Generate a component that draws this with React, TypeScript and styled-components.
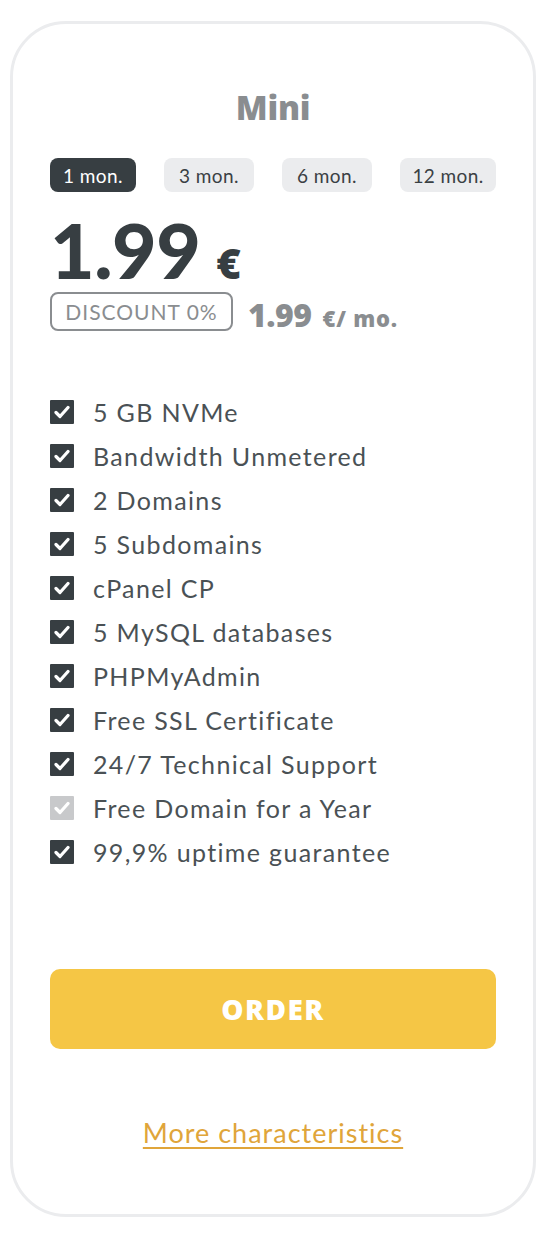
import React, { useState } from "react";
import styled, { createGlobalStyle } from "styled-components";

const Global = createGlobalStyle`
  html, body { margin: 0; padding: 0; background: #ffffff; }
  body { font-family: "Lato", "Open Sans", sans-serif; }
  * { box-sizing: border-box; }
`;

const Page = styled.div`
  padding: 21px 12px 0 10px;
`;

const Card = styled.div`
  width: 526px;
  height: 1196px;
  border: 3px solid #ebecee;
  border-radius: 56px;
  padding: 61px 37px 0 37px;
  display: flex;
  flex-direction: column;
`;

const Title = styled.h2`
  margin: 0;
  text-align: center;
  font-family: "Open Sans", sans-serif;
  font-weight: 800;
  font-size: 33px;
  line-height: 46px;
  color: #8a8d90;
  letter-spacing: -0.3px;
`;

const Tabs = styled.div`
  margin-top: 27px;
  display: flex;
  justify-content: space-between;
`;

const Tab = styled.button<{ $active?: boolean; $w: number }>`
  width: ${(p) => p.$w}px;
  height: 34px;
  border: none;
  border-radius: 8px;
  background: ${(p) => (p.$active ? "#373e42" : "#ebecee")};
  color: ${(p) => (p.$active ? "#ffffff" : "#3a4044")};
  font-family: "Lato", sans-serif;
  font-size: 19px;
  letter-spacing: 0.4px;
  padding: 0;
  cursor: pointer;
`;

const PriceRow = styled.div`
  margin-top: 19px;
  display: flex;
  align-items: baseline;
  color: #373e42;
  height: 76px;
`;

const Big = styled.span`
  font-family: "Lato", sans-serif;
  font-weight: 900;
  font-size: 77px;
  line-height: 76px;
  letter-spacing: -0.5px;
`;

const Cur = styled.span`
  font-family: "Open Sans", sans-serif;
  font-weight: 800;
  font-size: 42px;
  margin-left: 16px;
`;

const SubRow = styled.div`
  margin-top: 0;
  display: flex;
  align-items: center;
  gap: 15px;
`;

const Badge = styled.span`
  height: 39px;
  width: 183px;
  border: 2px solid #8a8d90;
  border-radius: 8px;
  display: flex;
  align-items: center;
  justify-content: center;
  color: #8a8d90;
  font-family: "Lato", sans-serif;
  font-size: 21px;
  line-height: 24px;
  letter-spacing: 1px;
`;

const Monthly = styled.span`
  color: #8a8d90;
  font-family: "Open Sans", sans-serif;
  font-weight: 800;
  display: flex;
  align-items: baseline;
  margin-top: 6px;
`;

const MonthlyNum = styled.span`
  font-size: 32px;
  letter-spacing: -0.5px;
`;

const MonthlyUnit = styled.span`
  font-size: 22px;
  margin-left: 11px;
  letter-spacing: 0.8px;
`;

const Features = styled.ul`
  list-style: none;
  margin: 64px 0 0 0;
  padding: 0;
  display: flex;
  flex-direction: column;
  gap: 20px;
`;

const Feature = styled.li`
  display: flex;
  align-items: center;
  gap: 19px;
  height: 24px;
  color: #4a5155;
  font-family: "Lato", sans-serif;
  font-size: 25px;
  letter-spacing: 1.35px;
`;

const Box = styled.span<{ $off?: boolean }>`
  width: 24px;
  height: 24px;
  flex: none;
  border-radius: 1px;
  background: ${(p) => (p.$off ? "#c8c9cb" : "#373e42")};
  display: flex;
  align-items: center;
  justify-content: center;
`;

const OrderButton = styled.button`
  margin-top: 105px;
  height: 80px;
  width: 100%;
  border: none;
  border-radius: 10px;
  background: #f5c645;
  color: #ffffff;
  font-family: "Open Sans", sans-serif;
  font-weight: 800;
  font-size: 28px;
  letter-spacing: 1.5px;
  cursor: pointer;
`;

const More = styled.a`
  margin-top: 67px;
  align-self: center;
  color: #e0a53a;
  font-family: "Lato", sans-serif;
  font-size: 27px;
  letter-spacing: 1px;
  text-decoration: underline;
  text-underline-offset: 4px;
  text-decoration-thickness: 2px;
  cursor: pointer;
`;

const Check = () => (
  <svg width="16" height="14" viewBox="0 0 16 14">
    <path d="M2 7.5 L6 11.5 L14 2.5" fill="none" stroke="#fff" strokeWidth="3.2" strokeLinecap="round" strokeLinejoin="round" />
  </svg>
);

const periods = [
  { label: "1 mon.", w: 86 },
  { label: "3 mon.", w: 90 },
  { label: "6 mon.", w: 90 },
  { label: "12 mon.", w: 96 },
];

const features: { text: string; off?: boolean }[] = [
  { text: "5 GB NVMe" },
  { text: "Bandwidth Unmetered" },
  { text: "2 Domains" },
  { text: "5 Subdomains" },
  { text: "cPanel CP" },
  { text: "5 MySQL databases" },
  { text: "PHPMyAdmin" },
  { text: "Free SSL Certificate" },
  { text: "24/7 Technical Support" },
  { text: "Free Domain for a Year", off: true },
  { text: "99,9% uptime guarantee" },
];

export default function App() {
  const [active, setActive] = useState(0);
  return (
    <>
      <Global />
      <Page>
        <Card>
          <Title>Mini</Title>
          <Tabs>
            {periods.map((p, i) => (
              <Tab key={p.label} $w={p.w} $active={i === active} onClick={() => setActive(i)}>
                {p.label}
              </Tab>
            ))}
          </Tabs>
          <PriceRow>
            <Big>1.99</Big>
            <Cur>€</Cur>
          </PriceRow>
          <SubRow>
            <Badge>DISCOUNT 0%</Badge>
            <Monthly>
              <MonthlyNum>1.99</MonthlyNum>
              <MonthlyUnit>€/ mo.</MonthlyUnit>
            </Monthly>
          </SubRow>
          <Features>
            {features.map((f) => (
              <Feature key={f.text}>
                <Box $off={f.off}>
                  <Check />
                </Box>
                {f.text}
              </Feature>
            ))}
          </Features>
          <OrderButton>ORDER</OrderButton>
          <More>More characteristics</More>
        </Card>
      </Page>
    </>
  );
}
